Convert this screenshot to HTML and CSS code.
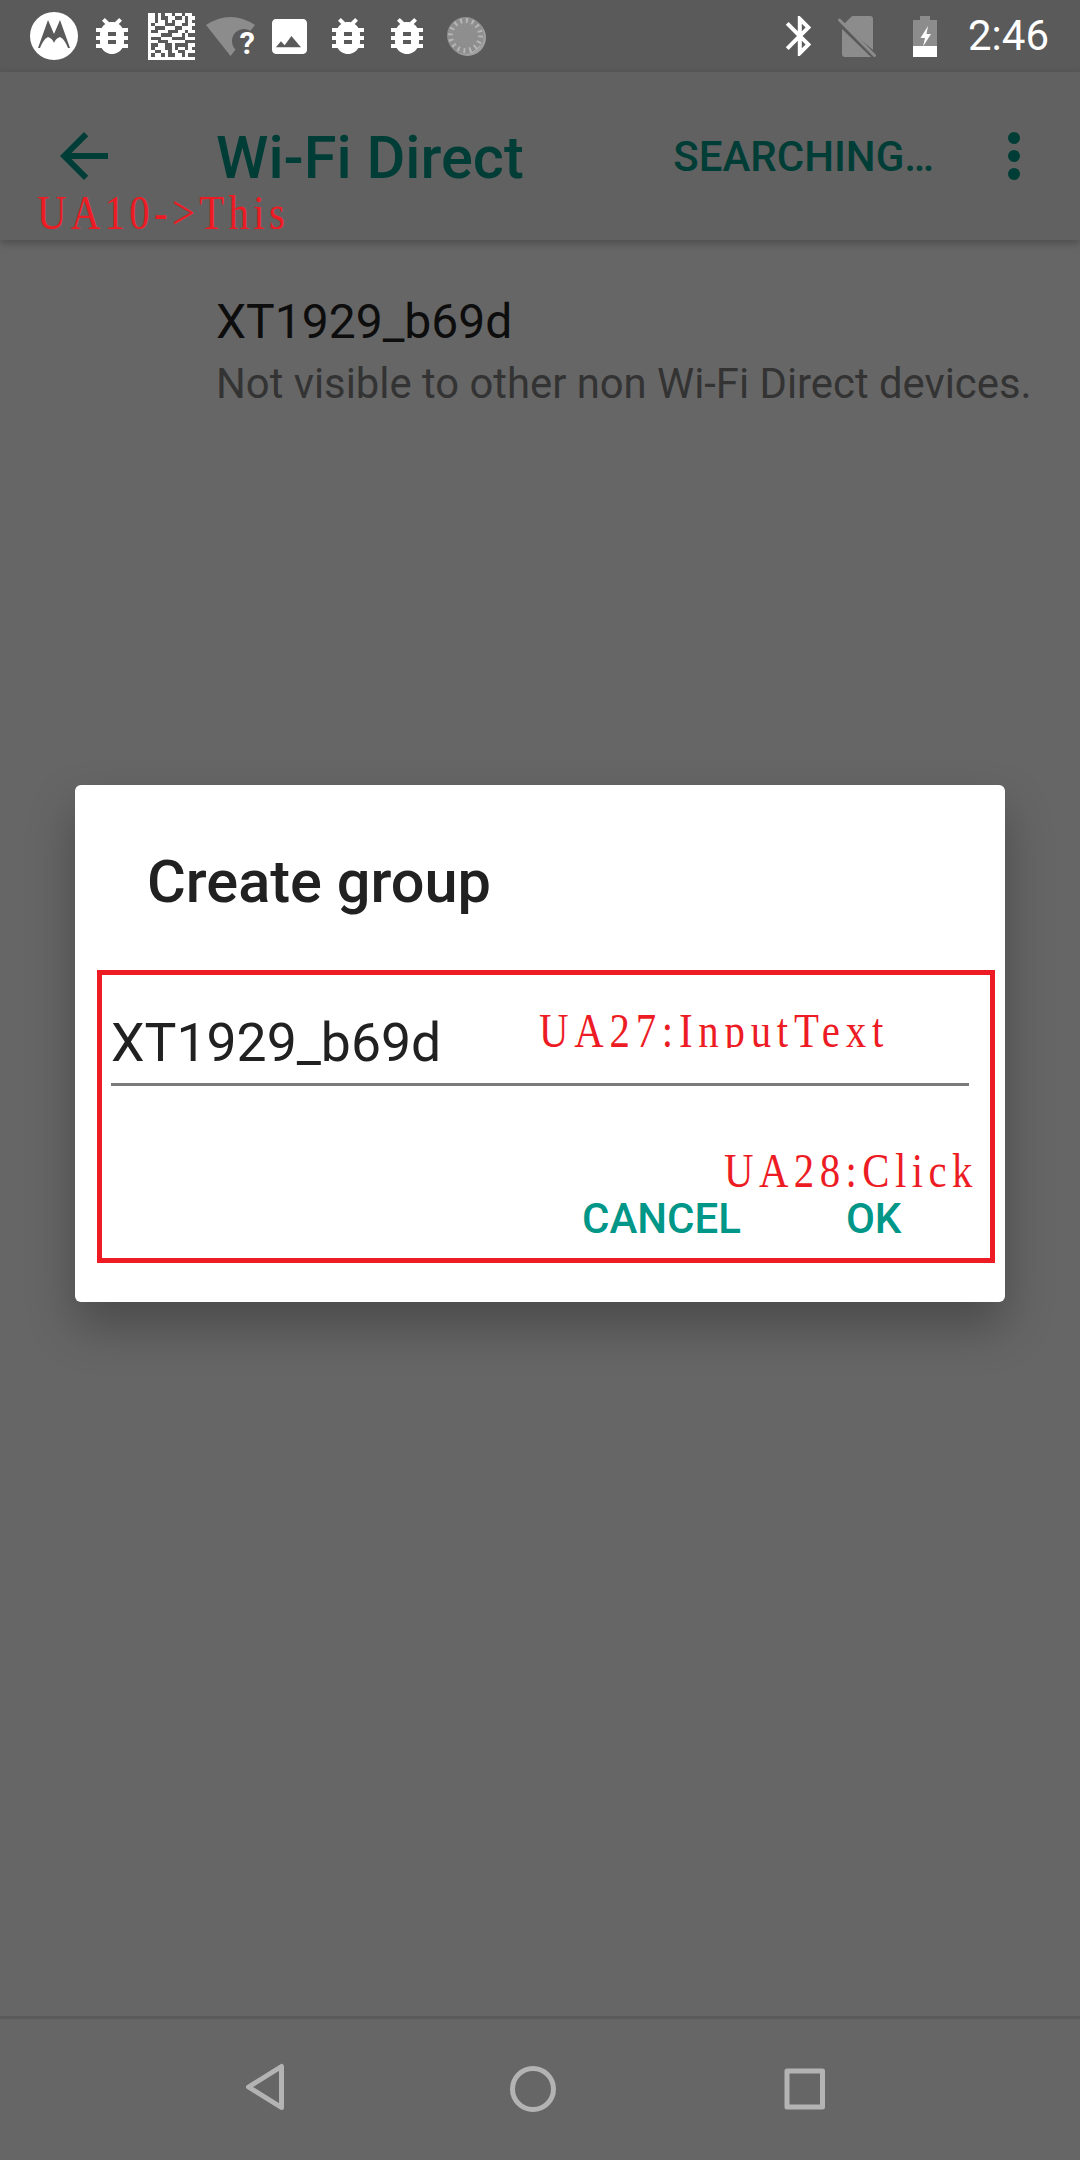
FILE: index.html
```html
<!DOCTYPE html>
<html lang="en">
<head>
<meta charset="utf-8">
<title>Wi-Fi Direct</title>
<link rel="stylesheet" href="styles.css">
</head>
<body>
<div class="page">
  <header class="status">
    <svg class="moto" viewBox="0 0 48 48"><circle cx="24" cy="24" r="24" fill="#fff"/><path fill="#5a5a5a" d="M8 36 18 8l6 14 6-14 10 28h-2c-2-5-4-9-8-11-3 1-5 3-6 6-1-3-3-5-6-6-4 2-6 6-8 11z"/></svg>
    <svg class="bug bug-1" viewBox="4 3 16 18"><path fill="#fff" d="M20 8h-2.81c-.45-.78-1.07-1.45-1.82-1.96L17 4.41 15.59 3l-2.17 2.17C12.96 5.06 12.49 5 12 5c-.49 0-.96.06-1.41.17L8.41 3 7 4.41l1.62 1.63C7.88 6.55 7.26 7.22 6.81 8H4v2h2.09c-.05.33-.09.66-.09 1v1H4v2h2v1c0 .34.04.67.09 1H4v2h2.81c1.04 1.79 2.97 3 5.19 3s4.15-1.21 5.19-3H20v-2h-2.09c.05-.33.09-.66.09-1v-1h2v-2h-2v-1c0-.34-.04-.67-.09-1H20V8zm-6 8h-4v-2h4v2zm0-4h-4v-2h4v2z"/></svg>
    <svg class="qr" viewBox="0 0 14 14" shape-rendering="crispEdges"><path fill="none" stroke="#fff" d="M0 .5h2m1 0h1m1 0h2m1 0h2m1 0h2M0 1.5h2m1 0h1m2 0h2m2 0h1m1 0h2M0 2.5h2m1 0h2m1 0h1m1 0h3m1 0h1M0 3.5h1m1 0h3m3 0h2m2 0h2M0 4.5h2m3 0h3m2 0h3M0 5.5h1m2 0h3m3 0h2m1 0h2M0 6.5h4m3 0h3m1 0h1M0 7.5h1m3 0h3m4 0h3M0 8.5h3m3 0h5M0 9.5h1m2 0h2m2 0h1m4 0h2M0 10.5h1m1 0h3m2 0h1m1 0h2m1 0h1M0 11.5h2m2 0h2m1 0h2m2 0h3M0 12.5h1m1 0h2m1 0h1m2 0h2m1 0h1M0 13.5h14"/></svg>
    <svg class="wifi" viewBox="0 0 49 39"><path fill="#8c8c8c" d="M0 8Q24.500-8 49 8L24.500 39z"/><circle cx="38" cy="24" r="12" fill="#5a5a5a"/><text class="wifi-q" x="33.500" y="37">?</text></svg>
    <svg class="photo" viewBox="3 3 18 18"><path fill="#fff" d="M21 19V5c0-1.100-.9-2-2-2H5c-1.100 0-2 .9-2 2v14c0 1.100.9 2 2 2h14c1.100 0 2-.9 2-2zM5 17.500l2.600-3 1.900 2 3.500-4.700 4 4.700 1 1z"/></svg>
    <svg class="bug bug-2" viewBox="4 3 16 18"><path fill="#fff" d="M20 8h-2.81c-.45-.78-1.07-1.45-1.82-1.96L17 4.41 15.59 3l-2.17 2.17C12.96 5.06 12.49 5 12 5c-.49 0-.96.06-1.41.17L8.41 3 7 4.41l1.62 1.63C7.88 6.55 7.26 7.22 6.81 8H4v2h2.09c-.05.33-.09.66-.09 1v1H4v2h2v1c0 .34.04.67.09 1H4v2h2.81c1.04 1.79 2.97 3 5.19 3s4.15-1.21 5.19-3H20v-2h-2.09c.05-.33.09-.66.09-1v-1h2v-2h-2v-1c0-.34-.04-.67-.09-1H20V8zm-6 8h-4v-2h4v2zm0-4h-4v-2h4v2z"/></svg>
    <svg class="bug bug-3" viewBox="4 3 16 18"><path fill="#fff" d="M20 8h-2.81c-.45-.78-1.07-1.45-1.82-1.96L17 4.41 15.59 3l-2.17 2.17C12.96 5.06 12.49 5 12 5c-.49 0-.96.06-1.41.17L8.41 3 7 4.41l1.62 1.63C7.88 6.55 7.26 7.22 6.81 8H4v2h2.09c-.05.33-.09.66-.09 1v1H4v2h2v1c0 .34.04.67.09 1H4v2h2.81c1.04 1.79 2.97 3 5.19 3s4.15-1.21 5.19-3H20v-2h-2.09c.05-.33.09-.66.09-1v-1h2v-2h-2v-1c0-.34-.04-.67-.09-1H20V8zm-6 8h-4v-2h4v2zm0-4h-4v-2h4v2z"/></svg>
    <svg class="dial" viewBox="0 0 39 39"><circle cx="20.500" cy="20.500" r="18.500" fill="#a0a0a0"/><path fill="#fff" d="M36 14a18 18 0 0 1-22 21c8 2 19-5 22-21z"/><circle cx="18.500" cy="18.500" r="18.500" fill="#8e8e8e"/><circle cx="18.500" cy="18.500" r="15" fill="none" stroke="#b5b5b5" stroke-width="5" stroke-dasharray="2 3.890"/><path fill="#fff" d="M34 27c-3 6-9 10-16 10-1 0-2 0-3-.3 8 1.300 15-3 19-9.700z"/></svg>
    <svg class="bt" viewBox="5 2 12.710 20"><path fill="#fff" d="M17.710 7.710L12 2h-1v7.590L6.410 5 5 6.410 10.590 12 5 17.590 6.410 19 11 14.410V22h1l5.710-5.710-4.300-4.290 4.300-4.290zM13 5.830l1.880 1.880L13 9.590V5.830zm1.880 10.460L13 18.170v-3.760l1.880 1.880z"/></svg>
    <svg class="sim" viewBox="0 0 38 41"><path fill="#8c8c8c" d="M5 9 13 1q1-1 2-1h17q3 0 3 3v31zM4 13l29 28H7q-3 0-3-3z"/><path stroke="#8c8c8c" stroke-width="3" stroke-linecap="round" d="M1.500 4 36.500 39.500"/></svg>
    <svg class="battery" viewBox="0 0 24 41"><path fill="#8c8c8c" d="M7 0h10v4h7v26H0V4h7z"/><path fill="#fff" d="M0 30h24v11H0z"/><path fill="#fff" d="M15 10 7.500 22H12l-2 8.500 8-12.500h-4.500z"/></svg>
    <span class="time">2:46</span>
  </header>

  <div class="appbar">
    <svg class="app-icon back" viewBox="0 0 24 24"><path d="M20 11H7.830l5.590-5.590L12 4l-8 8 8 8 1.410-1.410L7.830 13H20v-2z"/></svg>
    <h1 class="app-title">Wi-Fi Direct</h1>
    <span class="app-action">SEARCHING…</span>
    <svg class="app-icon more" viewBox="0 0 24 24"><circle cx="12" cy="6" r="2"/><circle cx="12" cy="12" r="2"/><circle cx="12" cy="18" r="2"/></svg>
  </div>

  <main class="device">
    <div class="device-name">XT1929_b69d</div>
    <div class="device-note">Not visible to other non Wi-Fi Direct devices.</div>
  </main>

  <nav class="nav">
    <svg class="nav-icon" viewBox="0 0 72 72"><path class="nav-stroke" d="M52.500 14.500V55.500L19.500 35z"/></svg>
    <svg class="nav-icon" viewBox="0 0 72 72"><circle class="nav-stroke" cx="34" cy="37" r="20.500"/></svg>
    <svg class="nav-icon" viewBox="0 0 72 72"><rect class="nav-stroke" x="18" y="19" width="35.500" height="36"/></svg>
  </nav>

  <section class="dialog">
    <h2 class="dialog-title">Create group</h2>
    <div class="field"><span class="field-text">XT1929_b69d</span></div>
    <div class="actions">
      <span class="btn btn-cancel">CANCEL</span>
      <span class="btn btn-ok">OK</span>
    </div>
  </section>

  <div class="mark-box"></div>
  <span class="mark mark-this">UA10-&gt;This</span>
  <span class="mark mark-input">UA27:InputText</span>
  <span class="mark mark-click">UA28:Click</span>
</div>
</body>
</html>
```
FILE: styles.css
```css
* { box-sizing: border-box; }
html, body { margin: 0; padding: 0; }
body { width: 1080px; height: 2160px; overflow: hidden; background: #666; font-family: Roboto, "Liberation Sans", sans-serif; }
.page { position: relative; width: 1080px; height: 2160px; display: flex; flex-direction: column; background: #666; }

.status { flex: none; height: 72px; display: flex; align-items: center; padding: 0 31px 0 30px; background: #5a5a5a; }
.status svg { flex: none; display: block; }
.moto { width: 48px; height: 48px; }
.bug { width: 32px; height: 36px; }
.bug-1 { margin-left: 18px; }
.qr { width: 47px; height: 47px; margin-left: 20px; }
.wifi { width: 49px; height: 39px; margin-left: 11px; overflow: visible; }
.wifi-q { font: 700 31px Roboto, sans-serif; fill: #fff; }
.photo { width: 35px; height: 35px; margin-left: 17px; }
.bug-2 { margin-left: 25px; }
.bug-3 { margin-left: 27px; }
.dial { width: 39px; height: 39px; margin-left: 24px; }
.bt { width: 27px; height: 40px; margin-left: auto; }
.sim { width: 38px; height: 41px; margin-left: 26px; }
.battery { width: 24px; height: 41px; margin-left: 37px; }
.time { margin-left: 31px; font-size: 42px; line-height: 72px; color: #fff; }

.appbar { position: relative; flex: none; height: 168px; display: flex; align-items: center; background: #616161; box-shadow: 0 3px 8px rgba(0, 0, 0, .25); color: #003d36; padding-left: 48px; }
.app-icon { flex: none; width: 72px; height: 72px; fill: #003d36; }
.app-title { margin: 0 0 0 96px; padding-top: 4px; font-size: 59.500px; font-weight: 500; }
.app-action { margin-left: auto; font-size: 42px; font-weight: 500; }
.more { margin: 0 30px 0 44px; }

.device { padding: 52px 0 0 216px; }
.device-name { font-size: 48px; line-height: 60px; color: #0d0d0d; }
.device-note { font-size: 41.800px; line-height: 63px; color: #333; white-space: nowrap; }

.nav { flex: none; margin-top: auto; height: 144px; display: flex; gap: 198px; padding: 33px 0 0 229px; border-top: 3px solid #5a5a5a; }
.nav-icon { width: 72px; height: 72px; }
.nav-stroke { fill: none; stroke: #b3b3b3; stroke-width: 5px; stroke-linejoin: round; }

.dialog { position: absolute; left: 75px; top: 785px; width: 930px; height: 517px; display: flex; flex-direction: column; background: #fff; border-radius: 6px; box-shadow: 0 24px 48px rgba(0, 0, 0, .28); }
.dialog-title { margin: 0; padding: 57px 0 0 72px; font-size: 59.500px; line-height: 80px; font-weight: 500; color: #212121; }
.field { margin: 82px 36px 0 36px; height: 82px; border-bottom: 3px solid #7b7b7b; }
.field-text { display: block; font-size: 53.500px; line-height: 78px; color: #212121; }
.actions { display: flex; padding: 110px 0 0 507px; }
.btn { font-size: 42px; line-height: 46px; font-weight: 500; color: #009688; }
.btn-ok { margin-left: 105px; }

.mark-box { position: absolute; left: 97px; top: 970px; width: 898px; height: 293px; border: 5px solid #ed1c24; }
.mark { position: absolute; font-family: "Liberation Serif", serif; font-size: 48px; line-height: 34px; height: 34px; color: #ed1c24; white-space: pre; transform: scaleX(.85); transform-origin: left top; }
.mark-this { left: 37px; top: 196px; letter-spacing: 5.100px; }
.mark-input { left: 539px; top: 1014px; letter-spacing: 6.800px; overflow: hidden; }
.mark-click { left: 724px; top: 1154px; letter-spacing: 6.400px; }
```
